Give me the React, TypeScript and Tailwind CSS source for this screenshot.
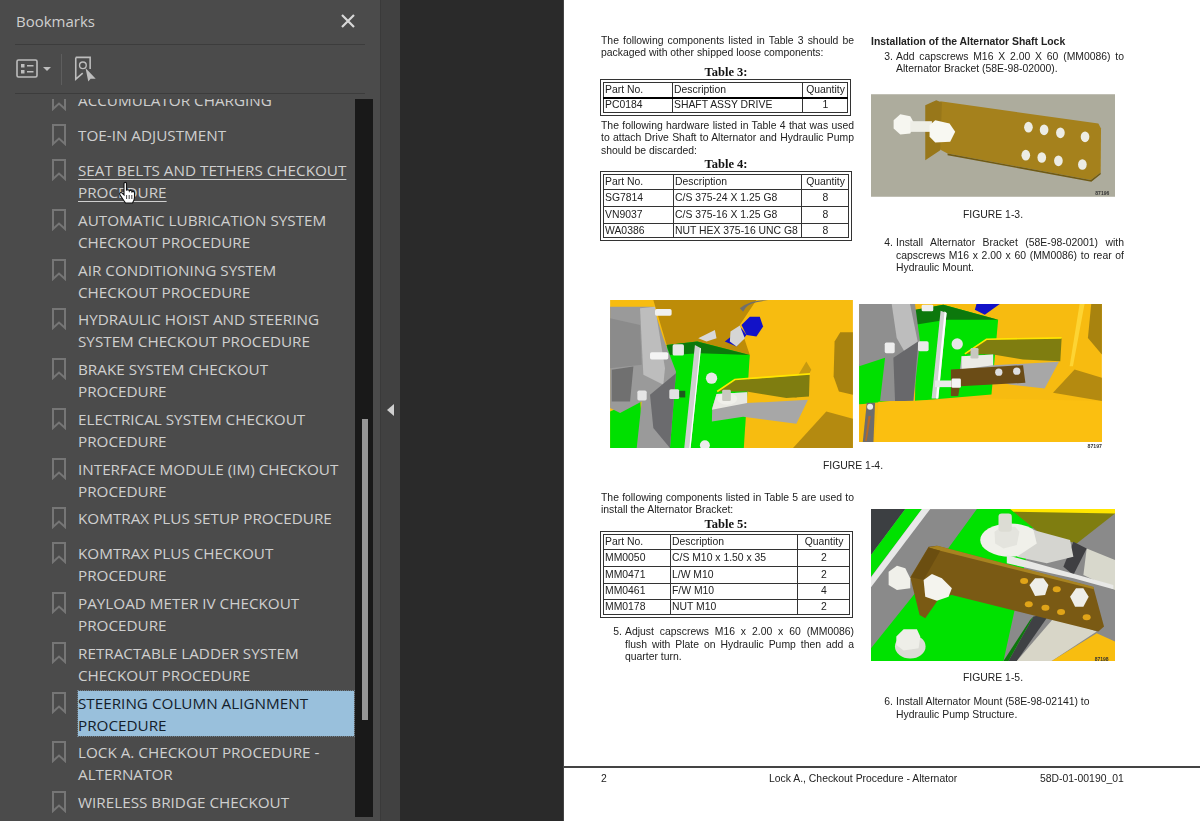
import React from 'react';

const bookmarks = [
  { lines: ['ACCUMULATOR CHARGING'], h: 'h-[35px]' },
  { lines: ['TOE-IN ADJUSTMENT'], h: 'h-[35px]' },
  { lines: ['SEAT BELTS AND TETHERS CHECKOUT', 'PROCEDURE'], h: 'h-[49.75px]', hover: true },
  { lines: ['AUTOMATIC LUBRICATION SYSTEM', 'CHECKOUT PROCEDURE'], h: 'h-[49.75px]' },
  { lines: ['AIR CONDITIONING SYSTEM', 'CHECKOUT PROCEDURE'], h: 'h-[49.75px]' },
  { lines: ['HYDRAULIC HOIST AND STEERING', 'SYSTEM CHECKOUT PROCEDURE'], h: 'h-[49.75px]' },
  { lines: ['BRAKE SYSTEM CHECKOUT', 'PROCEDURE'], h: 'h-[49.75px]' },
  { lines: ['ELECTRICAL SYSTEM CHECKOUT', 'PROCEDURE'], h: 'h-[49.75px]' },
  { lines: ['INTERFACE MODULE (IM) CHECKOUT', 'PROCEDURE'], h: 'h-[49.75px]' },
  { lines: ['KOMTRAX PLUS SETUP PROCEDURE'], h: 'h-[35px]' },
  { lines: ['KOMTRAX PLUS CHECKOUT', 'PROCEDURE'], h: 'h-[49.75px]' },
  { lines: ['PAYLOAD METER IV CHECKOUT', 'PROCEDURE'], h: 'h-[49.75px]' },
  { lines: ['RETRACTABLE LADDER SYSTEM', 'CHECKOUT PROCEDURE'], h: 'h-[49.75px]' },
  { lines: ['STEERING COLUMN ALIGNMENT', 'PROCEDURE'], h: 'h-[49.75px]', selected: true },
  { lines: ['LOCK A. CHECKOUT PROCEDURE -', 'ALTERNATOR'], h: 'h-[49.75px]' },
  { lines: ['WIRELESS BRIDGE CHECKOUT'], h: 'h-[35px]' },
];

function BookmarkIcon() {
  return (
    <svg width="14" height="22" viewBox="0 0 14 22" className="shrink-0">
      <path d="M1 1H13V20L7 14.5L1 20Z" fill="none" stroke="#767676" strokeWidth="2" />
    </svg>
  );
}

function Sidebar() {
  return (
    <div className="w-[380px] h-full shrink-0 bg-[#4b4b4b] flex flex-col font-['Open_Sans',sans-serif] overflow-hidden">
      <div className="h-[45px] mx-[15px] w-[350px] shrink-0 flex items-center justify-between border-b border-[#3c3c3c] text-[#cfcfcf]">
        <span className="text-[15px] pl-px -mt-px">Bookmarks</span>
        <svg width="16" height="16" viewBox="0 0 16 16" className="mr-[9px] mb-[3px]">
          <path d="M2 2L14 14M14 2L2 14" stroke="#d8d8d8" strokeWidth="2.2" />
        </svg>
      </div>
      <div className="h-[49px] mx-[15px] w-[350px] shrink-0 flex items-center border-b border-[#3c3c3c]">
        <svg width="24" height="20" viewBox="0 0 24 20" className="ml-px">
          <rect x="1" y="1" width="20" height="17" rx="1.5" fill="none" stroke="#bdbdbd" strokeWidth="1.6" />
          <rect x="5" y="5" width="3.5" height="3.5" fill="#bdbdbd" />
          <rect x="5" y="11" width="3.5" height="3.5" fill="#bdbdbd" />
          <path d="M11 6.7H17.5M11 12.7H17.5" stroke="#bdbdbd" strokeWidth="1.6" />
        </svg>
        <div className="ml-[3px] border-x-[4px] border-t-[4px] border-x-transparent border-t-[#bdbdbd]" />
        <div className="w-px h-[31px] bg-[#5e5e5e] ml-[10px]" />
        <svg width="23" height="26" viewBox="0 0 24 28" className="ml-[12px]">
          <path d="M1.5 1.5H17V14M1.5 1.5V25L9 18.5" fill="none" stroke="#bdbdbd" strokeWidth="1.7" />
          <circle cx="9.2" cy="10" r="3.6" fill="none" stroke="#bdbdbd" strokeWidth="1.5" />
          <path d="M12 13L23 24.5H17.5L15 27.5Z" fill="#bdbdbd" />
        </svg>
      </div>
      <div className="mt-[5px] flex flex-1 min-h-0">
        <div className="w-[355px] shrink-0 overflow-hidden">
          <div className="-mt-[10px] pl-[52px] pr-px">
            {bookmarks.map((b) => (
              <div key={b.lines[0]} className={`${b.h} flex gap-[12px] relative`}>
                <BookmarkIcon />
                <div
                  className={`text-[15.25px] leading-[22px] flex-1 whitespace-nowrap ${
                    b.selected
                      ? 'bg-[#99c0dc] text-[#14202b] outline-1 outline-dotted outline-[#6f7f8a] h-[45px] -mt-px pt-px'
                      : 'text-[#cfcfcf]'
                  } ${b.hover ? 'underline underline-offset-[3px]' : ''}`}
                >
                  {b.lines.map((l) => (
                    <div key={l}>{l}</div>
                  ))}
                </div>
                {b.hover && (
                  <svg width="20" height="24" viewBox="0 0 20 24" className="absolute left-[66px] top-[22px]">
                    <path
                      d="M6 2.5C6 1 8.5 1 8.5 2.5V9.5C9 8.5 11 8.5 11.3 10C11.8 9 13.7 9.2 14 10.8C14.6 10 16.4 10.3 16.5 12V16.5C16.5 19 15 21 14.5 22H7.5C6.5 20.5 2.5 15 1.8 13.5C1 11.8 3 10.8 4.2 12.2L6 14Z"
                      fill="#fff"
                      stroke="#111"
                      strokeWidth="1.1"
                    />
                    <path d="M8.6 14V18M11.2 14V18M13.8 14V18" stroke="#111" strokeWidth="0.8" />
                  </svg>
                )}
              </div>
            ))}
          </div>
        </div>
        <div className="w-[18px] h-[718px] shrink-0 bg-[#191919] pl-[7px]">
          <div className="w-[5.5px] h-[301px] mt-[320px] bg-[#969696]" />
        </div>
      </div>
    </div>
  );
}

// justified lines as they break in the PDF, last one stays left unless told otherwise
const J = ({ lines, plain, className = '' }: { lines: string[]; plain?: boolean; className?: string }) => (
  <div className={`whitespace-nowrap ${className}`}>
    {lines.map((l, i) => (
      <div key={l} className={!plain && i < lines.length - 1 ? '[text-align-last:justify]' : ''}>{l}</div>
    ))}
  </div>
);

const Step = ({ n, lines, plain, className = '' }: { n: string; lines: string[]; plain?: boolean; className?: string }) => (
  <div className={`flex ${className}`}>
    <div className="w-[25px] text-right pr-[3px] shrink-0">{n}</div>
    <J lines={lines} plain={plain} className="flex-1" />
  </div>
);

const TableTitle = ({ children }: { children: React.ReactNode }) => (
  <div className="font-['Liberation_Serif',serif] font-bold text-[12.5px] leading-[14px] text-center text-[#111] pr-[3px]">{children}</div>
);

type TableProps = { rows: string[][]; cols: string[]; heights: string[]; width: string; thick?: boolean };

function PartsTable({ rows, cols, heights, width, thick }: TableProps) {
  return (
    <div className={`${width} -ml-[1px] border border-[#333] p-[2px]`}>
      <table className="w-full border-collapse table-fixed">
        <colgroup>
          {cols.map((c, i) => <col key={i} className={c} />)}
        </colgroup>
        <tbody>
          {rows.map((r, i) => (
            <tr key={r[0]} className={heights[i]}>
              {r.map((c, j) => (
                <td
                  key={j}
                  className={`border border-[#333] p-0 pl-[1px] leading-[10px] whitespace-nowrap overflow-hidden ${j === 2 ? 'text-center' : ''} ${
                    thick && i === 0 ? 'border-b-2 border-b-black' : ''
                  }`}
                >
                  {c}
                </td>
              ))}
            </tr>
          ))}
        </tbody>
      </table>
    </div>
  );
}

const Small = ({ x, y, children }: { x: number; y: number; children: string }) => (
  <text x={x} y={y} fontSize="15" fontFamily="Liberation Sans, sans-serif" fontWeight="bold" fill="#333">{children}</text>
);

function Figure13() {
  return (
    <svg width="244" height="103" viewBox="32 207 733 308" className="block">
      <rect x="32" y="207" width="733" height="308" fill="#adac9d" />
      <g className="blur-[1px]">
        <path d="M240 228L715 295L723 310L722 442L692 465L262 385L238 372Z" fill="#a5811c" />
        <path d="M195 240L228 225L245 232L240 375L195 405Z" fill="#98771a" />
        <path d="M692 465L722 442V447L694 470L262 390V385Z" fill="#6f5a14" />
        {[[505, 306], [552, 314], [601, 323], [675, 335], [497, 390], [545, 397], [595, 407], [667, 418]].map(([x, y]) => (
          <ellipse key={x} cx={x} cy={y} rx="13" ry="16" fill="#ececE4" />
        ))}
        <path d="M100 285L120 267L150 273L162 295L150 325L120 328L100 310Z" fill="#f6f6f0" />
        <rect x="150" y="288" width="65" height="32" fill="#eeeee6" />
        <path d="M208 300L225 285L268 295L285 320L270 350L225 352L208 335Z" fill="#f8f8f2" />
      </g>
      <Small x={706} y={509}>87196</Small>
    </svg>
  );
}

function Figure14a() {
  return (
    <svg width="243" height="148" viewBox="30 15 730 445" className="block">
      <g className="blur-[1px]">
        <rect x="30" y="15" width="730" height="445" fill="#f7bc10" />
        <path d="M160 15H470L420 90L450 180L200 150Z" fill="#bd8c08" />
        <path d="M420 40Q450 15 505 15L470 22Q440 28 430 50Z" fill="#6f6f6f" />
        <path d="M722 112H760V300L718 290L702 245L705 140Z" fill="#a8830f" />
        <path d="M580 460L680 350L760 372V460Z" fill="#b48a10" />
        <path d="M560 300L620 200L635 225L590 310Z" fill="#c69a10" />
        <path d="M200 150L292 140L450 180L432 460H205Z" fill="#00e200" />
        <path d="M200 150L292 140L450 180L300 175L210 180Z" fill="#0c780c" />
        <path d="M30 350L120 310L130 460H30Z" fill="#00e000" />
        <path d="M30 35L160 35L190 130L228 230L210 460H110L125 320L60 355L30 340Z" fill="#9a9a9a" />
        <path d="M120 40L165 35L195 220L190 270L130 240Z" fill="#bdbdbd" />
        <path d="M150 300L228 235L210 460L160 400Z" fill="#6b6b6e" />
        <path d="M30 70L120 90L125 210L30 220Z" fill="#8b8b8b" />
        <path d="M35 225L100 215L90 320L35 320Z" fill="#707070" />
        <path d="M285 150L303 160L272 460H253Z" fill="#cfcfcf" />
        <path d="M300 160L303 160L272 460H268Z" fill="#fff" />
        <path d="M425 90L450 65H480L490 95L470 125L440 120Z" fill="#1212c8" />
        <path d="M375 140L425 100L440 120L410 155Z" fill="#1212c8" />
        <path d="M295 130L345 105L350 130L320 140Z" fill="#d8d8d8" />
        <path d="M392 110L420 92L435 130L410 155L390 140Z" fill="#d5d5d5" />
        <rect x="218" y="148" width="34" height="34" rx="5" fill="#e8e8e8" />
        <rect x="150" y="172" width="55" height="22" rx="5" fill="#f4f4f4" />
        <rect x="165" y="42" width="50" height="20" rx="5" fill="#f0f0f0" />
        <rect x="112" y="287" width="28" height="30" rx="5" fill="#e6e6e6" />
        <rect x="208" y="283" width="30" height="30" rx="5" fill="#e2e2e2" />
        <rect x="238" y="288" width="18" height="20" fill="#1e5a1e" />
        <circle cx="335" cy="250" r="17" fill="#e8e8e8" />
        <circle cx="315" cy="452" r="15" fill="#ececec" />
        <path d="M355 290L405 256L630 238L628 305L560 310L440 290Z" fill="#7f7d10" />
        <path d="M352 290L405 254L631 237" fill="none" stroke="#ffe600" strokeWidth="5" />
        <path d="M350 298L442 292V325L625 315L590 387L430 366L336 380L337 340Z" fill="#a7a7a7" />
        <path d="M350 298L442 292V325L336 345Z" fill="#e8e8e2" />
        <ellipse cx="382" cy="312" rx="30" ry="18" fill="#f0f0ea" />
        <rect x="367" y="285" width="26" height="34" rx="4" fill="#c8c8c0" />
      </g>
    </svg>
  );
}

function Figure14b() {
  return (
    <svg width="243" height="138" viewBox="27 28 730 415" className="block">
      <g className="blur-[1px]">
        <rect x="27" y="28" width="730" height="415" fill="#f7bb10" />
        <path d="M380 28H450L405 60L375 45Z" fill="#1212c8" />
        <path d="M725 28H757V180L715 130Z" fill="#a8830f" />
        <path d="M690 28H705L670 215L660 215Z" fill="#fdd433" />
        <path d="M610 295L675 225L757 250V320Z" fill="#b48a10" />
        <path d="M200 45L280 30L445 75L425 300L195 320Z" fill="#00e200" />
        <path d="M195 45L280 30L445 75L290 75L200 90Z" fill="#0c780c" />
        <path d="M27 210L110 180L120 320L27 330Z" fill="#00e000" />
        <path d="M27 28H195L210 140L190 320H90L105 190L27 215Z" fill="#8f8f8f" />
        <path d="M125 28H180L205 150L180 200L140 130Z" fill="#bdbdbd" />
        <path d="M130 190L205 140L190 320H135Z" fill="#68686b" />
        <path d="M272 48L290 55L265 312H245Z" fill="#d2d2d2" />
        <path d="M284 50L290 55L265 312H258Z" fill="#fff" />
        <rect x="104" y="144" width="30" height="32" rx="5" fill="#ededed" />
        <rect x="204" y="140" width="32" height="30" rx="5" fill="#eaeaea" />
        <rect x="215" y="30" width="35" height="20" rx="4" fill="#eee" />
        <circle cx="322" cy="148" r="17" fill="#e6e6e6" />
        <path d="M345 178L410 134L636 130L632 200L520 195L430 180Z" fill="#7f7d10" />
        <path d="M345 178L410 134L636 130" fill="none" stroke="#ffe600" strokeWidth="5" />
        <path d="M335 185L430 180V212L628 202L585 282L480 270L330 225Z" fill="#a7a7a7" />
        <path d="M335 185L430 180V212L335 225Z" fill="#ecece6" />
        <rect x="362" y="160" width="24" height="32" rx="4" fill="#c8c8c0" />
        <path d="M303 225L520 212L527 265L330 275L325 305H303Z" fill="#6b4c16" />
        <circle cx="447" cy="233" r="11" fill="#dedede" />
        <circle cx="501" cy="230" r="11" fill="#dedede" />
        <rect x="255" y="258" width="50" height="20" fill="#eaeaea" />
        <rect x="305" y="252" width="28" height="28" rx="4" fill="#f4f4f4" />
        <path d="M85 322L425 312L757 320V443H72Z" fill="#fbbf10" />
        <path d="M27 330H85L72 443H27Z" fill="#f7ba0d" />
        <path d="M50 325H75L70 443H38Z" fill="#6d6d6d" />
        <path d="M55 365L62 365L50 440H45Z" fill="#b56a24" />
        <circle cx="60" cy="337" r="9" fill="#ececec" />
      </g>
    </svg>
  );
}

function Figure15() {
  return (
    <svg width="244" height="152" viewBox="32 27 733 456" className="block">
      <g className="blur-[1px]">
        <rect x="32" y="27" width="733" height="456" fill="#8a8a8a" />
        <path d="M32 27H135L32 165Z" fill="#3c3f42" />
        <path d="M135 27H185L32 230V165Z" fill="#00e200" />
        <path d="M185 27H210L32 262V232Z" fill="#e8e8e8" />
        <path d="M350 27H530L430 483H32V445L180 260Z" fill="#00e200" />
        <path d="M450 27H765V40L650 130L540 100Z" fill="#7f7d10" />
        <path d="M450 27H765V40L460 35Z" fill="#ffe600" />
        <path d="M680 145L765 180V270L670 225Z" fill="#d8d8cc" />
        <path d="M640 125L680 145L640 225L610 200Z" fill="#3f3f42" />
        <path d="M445 483L520 350L570 340L470 483Z" fill="#3f4144" />
        <path d="M430 483L510 360L520 350L445 483Z" fill="#0c780c" />
        <path d="M470 483L585 350L710 395L575 483Z" fill="#d8d6c8" />
        <path d="M575 483L710 400L765 425V483Z" fill="#f8bd10" />
        <ellipse cx="450" cy="120" rx="90" ry="50" fill="#f0f0ea" />
        <path d="M403 95L425 80H465L478 95L470 135L430 145L405 130Z" fill="#e4e4de" />
        <rect x="415" y="40" width="40" height="55" rx="10" fill="#dcdcd4" />
        <path d="M520 90L630 120L640 170L560 190L470 170L530 130Z" fill="#d5d5d0" />
        <path d="M440 165L760 255V268L640 235L440 190Z" fill="#e8e8e6" />
        <path d="M150 232L205 140L230 137L700 262L732 380L715 395L275 285L240 290L195 355L178 345Z" fill="#7a5a14" />
        <path d="M205 142L232 137L700 260L702 268L240 152Z" fill="#a88320" />
        <path d="M152 232L205 142L240 152L190 240Z" fill="#6b4e10" />
        {[[492, 243], [590, 268], [506, 313], [556, 323], [603, 336], [680, 352]].map(([x, y]) => (
          <ellipse key={x} cx={x} cy={y} rx="12" ry="9" fill="#e0a418" />
        ))}
        <path d="M508 255L525 235H550L565 255L555 285L525 288Z" fill="#eeeee8" />
        <path d="M630 290L648 265H670L686 290L670 320H645Z" fill="#eeeee8" />
        <path d="M85 215L110 197L135 205L150 235V265L110 270L85 255Z" fill="#f0f0ea" />
        <path d="M190 240L215 222L245 235L275 265L265 290L230 302L195 290Z" fill="#f4f4ee" />
        <ellipse cx="150" cy="440" rx="46" ry="36" fill="#dcdcd6" />
        <path d="M108 410L130 388H170L180 410L175 445L130 452L108 435Z" fill="#eeeee8" />
      </g>
      <Small x={704} y={483}>87198</Small>
    </svg>
  );
}

function PdfPage() {
  return (
    <div className="flex-1 h-full bg-white flex flex-col font-['Liberation_Sans',sans-serif] text-[10.4px] leading-[12.5px] text-[#222] blur-[0.25px]">
      <div className="pl-[37px] pt-[34.7px] flex-1">
        {/* top two columns */}
        <div className="h-[265.3px] flex gap-[17px]">
          <div className="w-[253px]">
            <J lines={['The following components listed in Table 3 should be', 'packaged with other shipped loose components:']} />
            <TableTitle><div className="mt-[5.5px]">Table 3:</div></TableTitle>
            <PartsTable
              width="w-[251px]"
              cols={['w-[69px]', 'w-[130px]', 'w-auto']}
              heights={['h-[15px]', 'h-[15px]']}
              thick
              rows={[
                ['Part No.', 'Description', 'Quantity'],
                ['PC0184', 'SHAFT ASSY DRIVE', '1'],
              ]}
            />
            <J
              className="mt-[3.5px]"
              lines={[
                'The following hardware listed in Table 4 that was used',
                'to attach Drive Shaft to Alternator and Hydraulic Pump',
                'should be discarded:',
              ]}
            />
            <TableTitle>Table 4:</TableTitle>
            <PartsTable
              width="w-[252px]"
              cols={['w-[70px]', 'w-[128px]', 'w-auto']}
              heights={['h-[15px]', 'h-[17px]', 'h-[17px]', 'h-[14px]']}
              rows={[
                ['Part No.', 'Description', 'Quantity'],
                ['SG7814', 'C/S 375-24 X 1.25 G8', '8'],
                ['VN9037', 'C/S 375-16 X 1.25 G8', '8'],
                ['WA0386', 'NUT HEX 375-16 UNC G8', '8'],
              ]}
            />
          </div>
          <div className="w-[253px]">
            <div className="font-bold mt-px">Installation of the Alternator Shaft Lock</div>
            <Step
              n="3."
              className="mt-[2.4px]"
              lines={['Add capscrews M16 X 2.00 X 60 (MM0086) to', 'Alternator Bracket (58E-98-02000).']}
            />
            <div className="mt-[18.5px]"><Figure13 /></div>
            <div className="mt-[12.4px] w-[244px] text-center">FIGURE 1-3.</div>
            <Step
              n="4."
              className="mt-[15.4px]"
              lines={[
                'Install Alternator Bracket (58E-98-02001) with',
                'capscrews M16 x 2.00 x 60 (MM0086) to rear of',
                'Hydraulic Mount.',
              ]}
            />
          </div>
        </div>

        {/* wide figures */}
        <div className="h-[191.7px]">
          <div className="flex ml-[9px] gap-[6px] h-[159.7px]">
            <Figure14a />
            <div className="mt-[4px]">
              <Figure14b />
              <div className="text-right font-bold text-[5.2px] leading-[8px] text-[#333]">87197</div>
            </div>
          </div>
          <div className="w-[504px] text-center">FIGURE 1-4.</div>
        </div>

        {/* bottom two columns */}
        <div className="flex gap-[17px]">
          <div className="w-[253px]">
            <J lines={['The following components listed in Table 5 are used to', 'install the Alternator Bracket:']} />
            <TableTitle>Table 5:</TableTitle>
            <PartsTable
              width="w-[253px]"
              cols={['w-[67px]', 'w-[127px]', 'w-auto']}
              heights={['h-[15px]', 'h-[17px]', 'h-[17px]', 'h-[16px]', 'h-[15px]']}
              rows={[
                ['Part No.', 'Description', 'Quantity'],
                ['MM0050', 'C/S M10 x 1.50 x 35', '2'],
                ['MM0471', 'L/W M10', '2'],
                ['MM0461', 'F/W M10', '4'],
                ['MM0178', 'NUT M10', '2'],
              ]}
            />
            <Step
              n="5."
              className="mt-[8.5px] -ml-px"
              lines={[
                'Adjust capscrews M16 x 2.00 x 60 (MM0086)',
                'flush with Plate on Hydraulic Pump then add a',
                'quarter turn.',
              ]}
            />
          </div>
          <div className="w-[253px] pt-[17px]">
            <Figure15 />
            <div className="mt-[11.7px] w-[244px] text-center">FIGURE 1-5.</div>
            <Step
              n="6."
              plain
              className="mt-[11.4px]"
              lines={['Install Alternator Mount (58E-98-02141) to', 'Hydraulic Pump Structure.']}
            />
          </div>
        </div>
      </div>

      {/* footer */}
      <div className="h-[55px] shrink-0 border-t-[2px] border-[#444] pt-[5px] pl-[37px] flex">
        <span className="w-[168px]">2</span>
        <span className="w-[271px]">Lock A., Checkout Procedure - Alternator</span>
        <span>58D-01-00190_01</span>
      </div>
    </div>
  );
}

export default function App() {
  return (
    <div className="w-[1200px] h-[821px] flex overflow-hidden bg-[#2a2a2a]">
      <Sidebar />
      <div className="w-[20px] h-full shrink-0 bg-[#414141] border-l border-[#3a3a3a] pt-[404px] pl-[6px]">
        <div className="w-0 h-0 border-y-[6px] border-r-[7px] border-y-transparent border-r-[#cfcfcf]" />
      </div>
      <div className="w-[164px] h-full shrink-0 bg-[#2a2a2a] border-r border-[#444]" />
      <PdfPage />
    </div>
  );
}
